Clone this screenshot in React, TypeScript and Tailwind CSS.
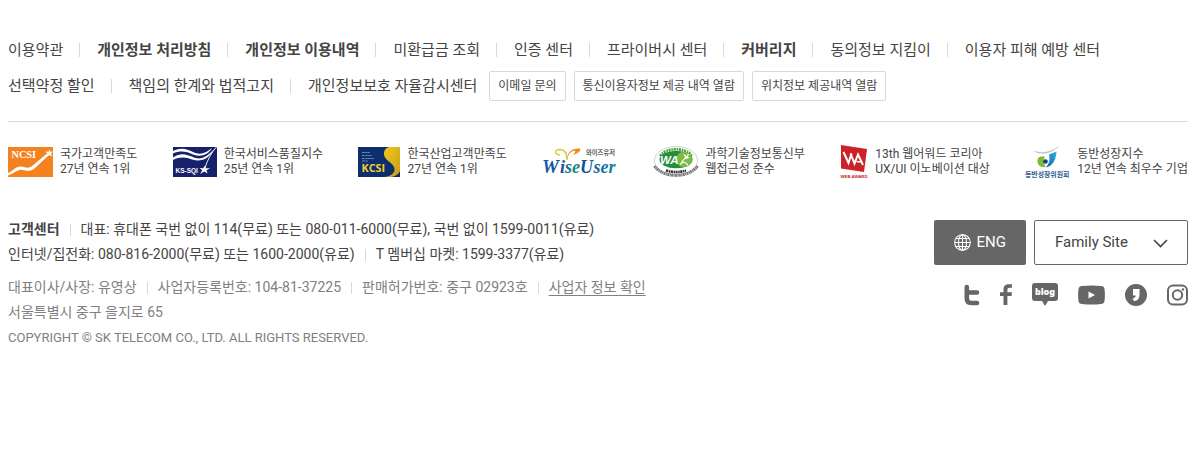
import type { ReactNode } from 'react';

type PolicyLink = { label: string; strong?: boolean };

const primaryLinks: PolicyLink[] = [
  { label: '이용약관' },
  { label: '개인정보 처리방침', strong: true },
  { label: '개인정보 이용내역', strong: true },
  { label: '미환급금 조회' },
  { label: '인증 센터' },
  { label: '프라이버시 센터' },
  { label: '커버리지', strong: true },
  { label: '동의정보 지킴이' },
  { label: '이용자 피해 예방 센터' },
];

const secondaryLinks: PolicyLink[] = [
  { label: '선택약정 할인' },
  { label: '책임의 한계와 법적고지' },
  { label: '개인정보보호 자율감시센터' },
];

const inquiryLinks = ['이메일 문의', '통신이용자정보 제공 내역 열람', '위치정보 제공내역 열람'];

function Divider({ tall = false }: { tall?: boolean }) {
  return <span aria-hidden="true" className={tall ? 'h-3.5 w-px bg-[#d9d9d9]' : 'h-3 w-px bg-[#d9d9d9]'} />;
}

function PolicyList({ links }: { links: PolicyLink[] }) {
  return (
    <ul className="flex flex-wrap items-center gap-x-4 text-[15px] leading-[30px] text-[#444]">
      {links.map((link, i) => (
        <li key={link.label} className="flex items-center gap-[17px]">
          {i > 0 && <Divider tall />}
          <a href="#" className={link.strong ? 'font-bold' : ''}>{link.label}</a>
        </li>
      ))}
    </ul>
  );
}

function NcsiLogo() {
  return (
    <svg width="45" height="30" viewBox="0 0 45 30" aria-hidden="true">
      <rect width="45" height="30" fill="#f58220" />
      <text x="3.5" y="10.5" fontSize="10.3" fontWeight="bold" fontFamily="Liberation Serif, serif" fill="#fff">NCSI</text>
      <path d="M0 26 C5 24 8 19 13 19.5 C18 20 20 23 26 17.500 L39 6.500 L40.500 8.500 L27 21 C21 26 17 23 13 22.800 C9 22.800 5 27 0 28.500Z" fill="#fff" />
      <path d="M41.500 2.500 L42.300 4.800 L45 4.500 L43 6.700 L44.500 9.500 L41.500 8.200 L38.500 9.500 L39.500 6.800 L37.500 4.500 L40.500 4.800Z" fill="#fff" />
    </svg>
  );
}

function KssqiLogo() {
  return (
    <svg width="44" height="30" viewBox="0 0 44 30" aria-hidden="true">
      <rect width="44" height="30" fill="#17216b" />
      <path d="M0 4 C8 0 14 2 20 5 C28 9 34 5 39 1 C35 8 28 10.500 20 7.500 C13 4 7 3.500 0 6.500Z" fill="#fff" />
      <path d="M0 10.500 C8 5 14 8 20 10 C28 14 35 9 41 2 C36 12 28 15.500 19 12.500 C13 10 7 9.500 0 13Z" fill="#fff" />
      <path d="M43.500 0 C38 6 34.500 13 32 21" fill="none" stroke="#fff" strokeWidth="0.900" />
      <text x="2.500" y="25.800" fontSize="6.500" fontWeight="bold" fontFamily="Liberation Sans, sans-serif" fill="#fff">KS-SQI</text>
      <path d="M32 18.500 L32.800 21.300 L37 21.300 L33.500 23.300 L34.500 26.500 L31.300 24.500 L27 27 L29.300 23.300 L26.500 21 L30.200 21.300Z" fill="#fff" />
    </svg>
  );
}

function KcsiLogo() {
  return (
    <svg width="42" height="30" viewBox="0 0 42 30" aria-hidden="true">
      <defs>
        <linearGradient id="kcsi-gold" x1="0" y1="0" x2="1" y2="1">
          <stop offset="0" stopColor="#f4c91b" />
          <stop offset="1" stopColor="#c89b18" />
        </linearGradient>
      </defs>
      <rect width="42" height="30" fill="#0d2f6d" />
      <path d="M31 0 H42 V24 C40 28 36 30 31 30 H27 C34 29 38 25 36 20 C34 15 26 13 26 7 C26 3 28 1 31 0Z" fill="url(#kcsi-gold)" />
      <path d="M4 5.500h8M4 8.500h10M4 11.500h12M4 14h6" stroke="#8fa3c8" strokeWidth="0.800" strokeDasharray="2 .4 1 .3" />
      <text x="3.500" y="25" fontSize="10.800" fontWeight="bold" fontFamily="Open Sans, sans-serif" fill="#f7d02c">KCSI</text>
    </svg>
  );
}

function WiseUserLogo() {
  return (
    <svg width="75" height="32" viewBox="0 0 75 32" role="img" aria-label="와이즈유저 Wise User">
      <defs>
        <linearGradient id="wise-blue" gradientUnits="userSpaceOnUse" x1="0" y1="0" x2="75" y2="0">
          <stop offset="0" stopColor="#1560ae" />
          <stop offset="0.25" stopColor="#174a94" />
          <stop offset="0.45" stopColor="#179088" />
          <stop offset="0.55" stopColor="#174e9c" />
          <stop offset="1" stopColor="#138a9c" />
        </linearGradient>
      </defs>
      <path d="M18 9 C12 8 12 3.500 18 3.500 C23 3.500 25 8 25 14" fill="none" stroke="#d6c72d" strokeWidth="1.300" />
      <path d="M25 14 C25 7 29 2 38 2.500 C40 4 35 8 31 9 C35 5 33 4 30 5.500 C27 7 26 10 25 14Z" fill="#ef8a21" />
      <text x="44" y="9" fontSize="6.300" fontWeight="bold" fontFamily="Noto Sans CJK KR, sans-serif" fill="#666">와이즈유저</text>
      <text x="0" y="27" fontSize="19" fontStyle="italic" fontWeight="bold" fontFamily="Liberation Serif, serif" fill="url(#wise-blue)">W</text>
      <text x="18" y="27" fontSize="18" fontStyle="italic" fontWeight="bold" fontFamily="Liberation Serif, serif" fill="url(#wise-blue)">ise</text>
      <text x="38" y="27" fontSize="18" fontStyle="italic" fontWeight="bold" fontFamily="Liberation Serif, serif" fill="url(#wise-blue)">U</text>
      <text x="51.500" y="27" fontSize="18" fontStyle="italic" fontWeight="bold" fontFamily="Liberation Serif, serif" fill="url(#wise-blue)">ser</text>
    </svg>
  );
}

function WebAccessLogo() {
  return (
    <svg width="46" height="32" viewBox="0 0 46 32" aria-hidden="true">
      <ellipse cx="23" cy="14.500" rx="21.500" ry="14" fill="#fff" stroke="#a5cf98" strokeWidth="0.700" />
      <path d="M7 10 C13 1 33 1 39 10" fill="none" stroke="#4d9c3c" strokeWidth="2.600" strokeDasharray="2.200 .8 1.500 .7" />
      <ellipse cx="23" cy="13.500" rx="16.500" ry="8.800" fill="#278c3c" />
      <ellipse cx="31" cy="13.500" rx="8" ry="7.800" fill="#79bd43" />
      <text x="7" y="17.800" fontSize="11.500" fontStyle="italic" fontWeight="bold" fontFamily="Liberation Sans, sans-serif" fill="#fff">WA</text>
      <path d="M31 8.500l2 2-1 2 4-1M32 12l-3 4 4 1 2 2.500M30 16l-3 2.500M35.500 8l-2 4" fill="none" stroke="#fff" strokeWidth="1.200" />
      <path d="M1.500 20 C10 32.500 36 32.500 44.500 20" fill="none" stroke="#777" strokeWidth="3" strokeDasharray="1.800 .5 1.200 .4" />
      <path d="M13 24.500 C20 26.500 26 26.500 33 24.500" fill="none" stroke="#333" strokeWidth="2.600" strokeDasharray="2.200 .6 1.500 .5" />
    </svg>
  );
}

function WebAwardLogo() {
  return (
    <svg width="28" height="34" viewBox="0 0 28 34" aria-hidden="true">
      <path d="M1 0 L27 4 L24 27 L1 23.500Z" fill="#cb2229" />
      <path d="M3.500 7 L8.500 18 L11.500 8.500" fill="none" stroke="#fff" strokeWidth="2" />
      <path d="M10.500 8.500 L14.500 18.500 L18 9.500 L23 20" fill="none" stroke="#fff" strokeWidth="2" />
      <path d="M16.500 16.500 L21 17" stroke="#fff" strokeWidth="1.500" />
      <text x="0.500" y="32.500" fontSize="4.300" fontWeight="bold" fontFamily="Liberation Sans, sans-serif" fill="#cb2229">WEB AWARD</text>
    </svg>
  );
}

function GrowthLogo() {
  return (
    <svg width="45" height="32" viewBox="0 0 45 32" role="img" aria-label="동반성장위원회">
      <defs>
        <linearGradient id="growth-blue" x1="1" y1="0" x2="0" y2="1">
          <stop offset="0" stopColor="#35b2df" />
          <stop offset="1" stopColor="#0b63ae" />
        </linearGradient>
      </defs>
      <path d="M9 5 C17 10 27 7 34 0 C27 6 17 8 9 5Z" fill="#bbb" stroke="#bbb" strokeWidth="0.300" />
      <path d="M13 12.500 C14 10.500 17 10 20 11 C18 13.500 19 17.500 20.500 21 C15 22 11 18 13 12.500Z" fill="#78bd3a" />
      <path d="M24 8.500 L31.500 5.500 C31 13.500 28 20.500 20.500 21.500 C25 17.500 25 12.500 24 8.500Z" fill="url(#growth-blue)" />
      <circle cx="20.500" cy="15.500" r="2.300" fill="#153e84" />
      <text x="0" y="30.500" fontSize="6.900" fontWeight="bold" fontFamily="Noto Sans CJK KR, sans-serif" fill="#2a5a92">동반성장위원회</text>
    </svg>
  );
}

type Award = { logo: ReactNode; lines?: [string, string] };

const awards: Award[] = [
  { logo: <NcsiLogo />, lines: ['국가고객만족도', '27년 연속 1위'] },
  { logo: <KssqiLogo />, lines: ['한국서비스품질지수', '25년 연속 1위'] },
  { logo: <KcsiLogo />, lines: ['한국산업고객만족도', '27년 연속 1위'] },
  { logo: <WiseUserLogo /> },
  { logo: <WebAccessLogo />, lines: ['과학기술정보통신부', '웹접근성 준수'] },
  { logo: <WebAwardLogo />, lines: ['13th 웹어워드 코리아', 'UX/UI 이노베이션 대상'] },
  { logo: <GrowthLogo />, lines: ['동반성장지수', '12년 연속 최우수 기업'] },
];

function GlobeIcon() {
  return (
    <svg width="17" height="17" viewBox="0 0 17 17" fill="none" stroke="currentColor" strokeWidth="1.100" aria-hidden="true">
      <circle cx="8.500" cy="8.500" r="7.800" />
      <ellipse cx="8.500" cy="8.500" rx="4" ry="7.800" />
      <path d="M8.500 .7v15.600M.7 8.500h15.600M2 4.500h13M2 12.500h13" />
    </svg>
  );
}

const socials: { name: string; icon: ReactNode }[] = [
  {
    name: '트위터',
    icon: (
      <svg width="16" height="22" viewBox="0 0 16 22" fill="none" stroke="currentColor" strokeWidth="4.600" strokeLinecap="round" strokeLinejoin="round" aria-hidden="true">
        <path d="M2.800 3v11.500q0 4.500 4.500 4.500h5.700M3 8.500h10" />
      </svg>
    ),
  },
  {
    name: '페이스북',
    icon: (
      <svg width="12" height="22" viewBox="0 0 12 22" fill="currentColor" aria-hidden="true">
        <path d="M3.500 21V12H0V8.300h3.500V5.500C3.500 2 5.500 .3 8.800 .3H12v3.500H9.800C8 3.800 7.400 4.500 7.400 6v2.300H12L11.500 12H7.400v9Z" />
      </svg>
    ),
  },
  {
    name: '블로그',
    icon: (
      <svg width="26" height="24" viewBox="0 0 26 24" aria-hidden="true">
        <path d="M3 0H23Q26 0 26 3V15Q26 18 23 18H16L13 23L10 18H3Q0 18 0 15V3Q0 0 3 0Z" fill="currentColor" />
        <text x="13" y="12.200" textAnchor="middle" fontSize="9" fontWeight="900" fontFamily="Noto Sans, sans-serif" fill="#fff">blog</text>
      </svg>
    ),
  },
  {
    name: '유튜브',
    icon: (
      <svg width="27" height="20" viewBox="0 0 27 20" aria-hidden="true">
        <path d="M4 1Q13.500 0 23 1Q26 1.200 26.500 4Q27.300 10 26.500 16Q26 18.800 23 19Q13.500 20 4 19Q1 18.800 .5 16Q-.3 10 .5 4Q1 1.200 4 1Z" fill="currentColor" />
        <path d="M10.500 6.500L17 10L10.500 13.500Z" fill="#fff" />
      </svg>
    ),
  },
  {
    name: '카카오스토리',
    icon: (
      <svg width="22" height="22" viewBox="0 0 22 22" aria-hidden="true">
        <circle cx="11" cy="11" r="11" fill="currentColor" />
        <path d="M8 5H14.500V10.500C14.500 14.500 12.500 17 9 17L7.500 14.500C9.500 14.300 10.500 13.300 10.800 11.500H8Z" fill="#fff" />
      </svg>
    ),
  },
  {
    name: '인스타그램',
    icon: (
      <svg width="21" height="22" viewBox="0 0 21 22" fill="none" stroke="currentColor" strokeWidth="2" aria-hidden="true">
        <rect x="1" y="1.500" width="19" height="19" rx="5" />
        <circle cx="10.500" cy="11" r="4.700" />
        <circle cx="16" cy="5.500" r="1.200" fill="currentColor" stroke="none" />
      </svg>
    ),
  },
];

export default function App() {
  return (
    <footer className="bg-white pt-[35px] pr-[5px] pl-2 font-['Roboto','Noto_Sans_CJK_KR',sans-serif] text-[#444]">
      <nav aria-label="약관 및 정책" className="flex flex-col gap-1.5 border-b border-[#d9d9d9] pb-5">
        <PolicyList links={primaryLinks} />
        <div className="flex flex-wrap items-center gap-x-3">
          <PolicyList links={secondaryLinks} />
          <ul className="flex flex-wrap gap-2">
            {inquiryLinks.map((label) => (
              <li key={label}>
                <a href="#" className="block rounded-xs border border-[#d9d9d9] px-2 text-xs leading-7">{label}</a>
              </li>
            ))}
          </ul>
        </div>
      </nav>

      <ul className="flex flex-wrap items-center justify-between pt-6">
        {awards.map((award, i) => (
          <li key={i} className="flex h-8 items-center gap-[7px] text-xs leading-[15px]">
            {award.logo}
            {award.lines && (
              <p>
                {award.lines[0]}
                <br />
                {award.lines[1]}
              </p>
            )}
          </li>
        ))}
      </ul>

      <div className="flex flex-wrap items-start justify-between pt-[39px]">
        <div className="text-sm leading-[25px]">
          <div className="flex items-center gap-2.5">
            <strong className="font-bold">고객센터</strong>
            <Divider />
            <span>대표: 휴대폰 국번 없이 114(무료) 또는 080-011-6000(무료), 국번 없이 1599-0011(유료)</span>
          </div>
          <div className="flex items-center gap-2.5">
            <span>인터넷/집전화: 080-816-2000(무료) 또는 1600-2000(유료)</span>
            <Divider />
            <span>T 멤버십 마켓: 1599-3377(유료)</span>
          </div>
          <address className="pt-2 text-[#808080] not-italic">
            <div className="flex items-center gap-2.5">
              <span>대표이사/사장: 유영상</span>
              <Divider />
              <span>사업자등록번호: 104-81-37225</span>
              <Divider />
              <span>판매허가번호: 중구 02923호</span>
              <Divider />
              <a href="#" className="underline underline-offset-3">사업자 정보 확인</a>
            </div>
            <p>서울특별시 중구 을지로 65</p>
          </address>
          <p className="text-[13px] text-[#808080]">COPYRIGHT © SK TELECOM CO., LTD. ALL RIGHTS RESERVED.</p>
        </div>

        <div className="flex flex-col items-end gap-[18px] pt-[3px]">
          <div className="flex gap-2">
            <a href="#" className="flex h-[45px] items-center gap-1.5 rounded-xs bg-[#666] px-5 text-[15px] text-white">
              <GlobeIcon />
              ENG
            </a>
            <div className="relative">
              <select aria-label="Family Site" className="h-[45px] w-[154px] appearance-none rounded-xs border border-[#666] bg-white pr-10 pl-5 text-[15px]">
                <option>Family Site</option>
              </select>
              <svg className="pointer-events-none absolute top-[19px] right-5" width="15" height="9" viewBox="0 0 15 9" fill="none" stroke="currentColor" strokeWidth="1.600" aria-hidden="true">
                <path d="M1 1L7.500 7.500L14 1" />
              </svg>
            </div>
          </div>
          <ul className="flex items-center gap-5 text-[#666]">
            {socials.map((social) => (
              <li key={social.name}>
                <a href="#" aria-label={social.name} className="block">{social.icon}</a>
              </li>
            ))}
          </ul>
        </div>
      </div>
    </footer>
  );
}
